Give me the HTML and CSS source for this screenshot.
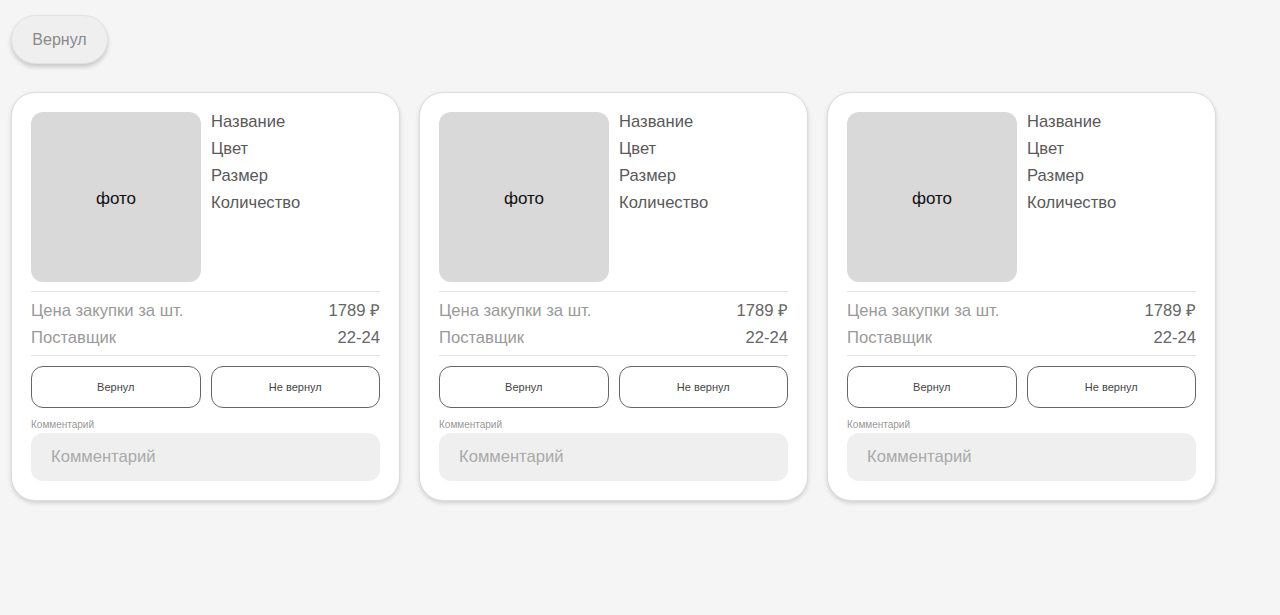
FILE: index.html
```html
<!DOCTYPE html>
<html lang="ru">
<head>
  <meta charset="UTF-8" />
  <meta name="viewport" content="width=device-width, initial-scale=1.0"/>
  <title>Возвраты</title>
  <link rel="stylesheet" href="styles.css">
</head>
<body>

  <div class="page">
    <button type="button" class="top-btn">Вернул</button>

    <div class="cards">
      <div class="card">
        <div class="card-top">
          <div class="photo">фото</div>
          <div class="info">
            <p>Название</p>
            <p>Цвет</p>
            <p>Размер</p>
            <p>Количество</p>
          </div>
        </div>
        <div class="details">
          <div class="row"><span>Цена закупки за шт.</span><span class="value">1789 ₽</span></div>
          <div class="row"><span>Поставщик</span><span class="value">22-24</span></div>
        </div>
        <div class="actions">
          <button type="button">Вернул</button>
          <button type="button">Не вернул</button>
        </div>
        <label class="comment-label">Комментарий</label>
        <input type="text" class="comment" placeholder="Комментарий" />
      </div>

      <div class="card">
        <div class="card-top">
          <div class="photo">фото</div>
          <div class="info">
            <p>Название</p>
            <p>Цвет</p>
            <p>Размер</p>
            <p>Количество</p>
          </div>
        </div>
        <div class="details">
          <div class="row"><span>Цена закупки за шт.</span><span class="value">1789 ₽</span></div>
          <div class="row"><span>Поставщик</span><span class="value">22-24</span></div>
        </div>
        <div class="actions">
          <button type="button">Вернул</button>
          <button type="button">Не вернул</button>
        </div>
        <label class="comment-label">Комментарий</label>
        <input type="text" class="comment" placeholder="Комментарий" />
      </div>

      <div class="card">
        <div class="card-top">
          <div class="photo">фото</div>
          <div class="info">
            <p>Название</p>
            <p>Цвет</p>
            <p>Размер</p>
            <p>Количество</p>
          </div>
        </div>
        <div class="details">
          <div class="row"><span>Цена закупки за шт.</span><span class="value">1789 ₽</span></div>
          <div class="row"><span>Поставщик</span><span class="value">22-24</span></div>
        </div>
        <div class="actions">
          <button type="button">Вернул</button>
          <button type="button">Не вернул</button>
        </div>
        <label class="comment-label">Комментарий</label>
        <input type="text" class="comment" placeholder="Комментарий" />
      </div>
    </div>
  </div>

</body>
</html>
```

FILE: styles.css
```css
* {
  margin: 0;
  padding: 0;
  box-sizing: border-box;
}

body, html {
  height: 100%;
  background-color: #f5f5f5;
  font-family: 'Liberation Sans', Arial, sans-serif;
}

.page {
  padding: 15px 11px;
}

.top-btn {
  width: 97px;
  height: 49px;
  border-radius: 25px;
  border: 1px solid #e2e2e2;
  background-color: #efefef;
  color: #8a8a8a;
  font-family: inherit;
  font-size: 16px;
  box-shadow: 0 3px 4px rgba(0, 0, 0, 0.18);
  cursor: pointer;
}

.cards {
  display: flex;
  gap: 19px;
  margin-top: 28px;
}

.card {
  width: 389px;
  background-color: #fff;
  border: 1px solid #dcdcdc;
  border-radius: 24px;
  padding: 19px 19px 19px;
  box-shadow: 0 2px 4px rgba(0, 0, 0, 0.15);
  display: flex;
  flex-direction: column;
}

.card-top {
  display: flex;
  gap: 10px;
  padding-bottom: 9px;
  border-bottom: 1px solid #e3e3e3;
}

.photo {
  width: 170px;
  height: 170px;
  padding-top: 3px;
  background-color: #d9d9d9;
  border-radius: 12px;
  display: flex;
  align-items: center;
  justify-content: center;
  font-size: 17px;
  color: #111;
}

.info {
  padding-top: 1px;
}

.info p {
  font-size: 16.6px;
  line-height: 27px;
  color: #595959;
  margin-top: -5px;
  margin-bottom: 5px;
}

.details {
  padding: 5px 0 4px;
  border-bottom: 1px solid #e3e3e3;
}

.row {
  display: flex;
  justify-content: space-between;
  font-size: 16.6px;
  line-height: 27px;
  color: #999;
}

.row .value {
  color: #666;
}

.actions {
  display: flex;
  gap: 10px;
  margin-top: 10px;
}

.actions button {
  flex: 1;
  height: 42px;
  background-color: #fff;
  border: 1px solid #666;
  border-radius: 12px;
  font-family: inherit;
  font-size: 11px;
  color: #444;
  cursor: pointer;
}

.comment-label {
  font-size: 10px;
  color: #999;
  margin-top: 11px;
  line-height: 12px;
}

.comment {
  margin-top: 2px;
  height: 48px;
  border: none;
  outline: none;
  border-radius: 12px;
  background-color: #efefef;
  padding: 0 20px;
  font-family: inherit;
  font-size: 16.6px;
  color: #555;
}

.comment::placeholder {
  color: #aaa;
}
```
